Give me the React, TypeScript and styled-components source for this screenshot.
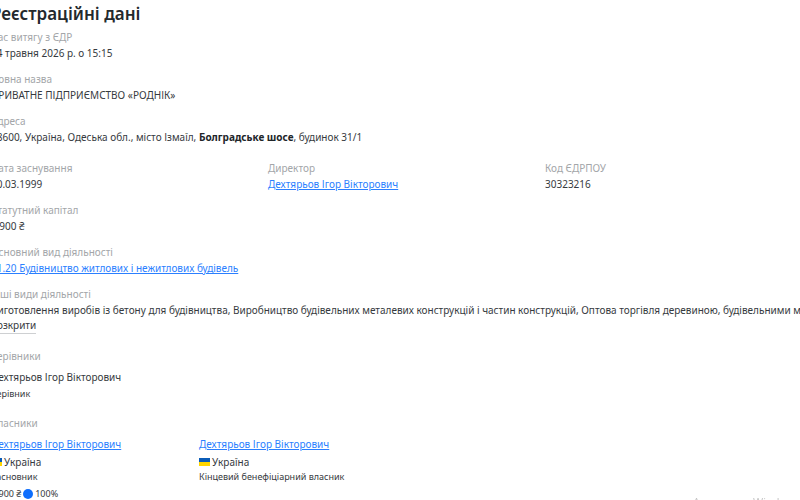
import React from 'react';
import styled, { createGlobalStyle } from 'styled-components';

const GlobalStyle = createGlobalStyle`
  *, *::before, *::after { box-sizing: border-box; }
  body {
    margin: 0;
    background: #fff;
    color: #363a3e;
    font-family: "Noto Sans", "Open Sans", sans-serif;
    font-size: 10px;
    line-height: 16px;
    overflow: hidden;
  }
`;

const Page = styled.main`
  margin-left: -9px;
  padding-top: 2px;
  overflow: hidden;
`;

const Title = styled.h1`
  margin: 0 0 3px;
  color: #24292d;
  font-size: 17px;
  line-height: 24px;
  font-weight: 600;
`;

const Details = styled.dl`
  display: flex;
  flex-direction: column;
  gap: 10px;
  margin: 0;
`;

const FieldRow = styled.div`
  display: grid;
  grid-template-columns: repeat(3, 277px);
  margin-top: 5px;
`;

const Field = styled.div`
  white-space: nowrap;
`;

const Label = styled.dt`
  color: #a3a6a9;
`;

const Value = styled.dd`
  margin: 0;
`;

const Strong = styled.b`
  color: #212529;
`;

const Link = styled.a`
  color: #2b7fff;
  text-decoration: underline;
`;

const Expand = styled.button`
  display: block;
  padding: 0;
  border: 0;
  border-bottom: 1px solid #ced0d2;
  background: none;
  color: inherit;
  font: inherit;
  line-height: 15px;
`;

const Section = styled.section`
  margin-top: 14px;
`;

const SectionTitle = styled.h2`
  margin: 0 0 5px;
  color: #a3a6a9;
  font-size: 10px;
  line-height: 16px;
  font-weight: 400;
`;

const People = styled.div`
  display: grid;
  grid-template-columns: repeat(2, 208px);
`;

const Person = styled.div`
  white-space: nowrap;
`;

const Country = styled.div`
  display: flex;
  align-items: center;
  gap: 2px;
  margin-top: 2px;
`;

const Flag = styled.span`
  width: 11px;
  height: 8px;
  background: linear-gradient(#0b5cb8 50%, #ffd600 50%);
`;

const Role = styled.div<{ $spaced?: boolean }>`
  margin-top: ${({ $spaced }) => ($spaced ? 2 : 0)}px;
  font-size: 9px;
  line-height: 14px;
`;

const Share = styled.div`
  display: flex;
  align-items: center;
  gap: 2px;
  margin-top: 3px;
  font-size: 9px;
  line-height: 14px;
`;

const Pie = styled.span`
  width: 10px;
  height: 10px;
  border-radius: 50%;
  background: #0d6efd;
`;

const Watermark = styled.div`
  position: fixed;
  left: 693px;
  bottom: -11px;
  color: #c4c4c4;
  font-family: "Open Sans", sans-serif;
  font-size: 11px;
  line-height: 18px;
  white-space: nowrap;
  pointer-events: none;
`;

const DIRECTOR = 'Дехтярьов Ігор Вікторович';

function Item({ label, children }: { label: string; children: React.ReactNode }) {
  return (
    <Field>
      <Label>{label}</Label>
      <Value>{children}</Value>
    </Field>
  );
}

export default function App() {
  return (
    <>
      <GlobalStyle />
      <Page>
        <Title>Реєстраційні дані</Title>
        <Details>
          <Item label="Час витягу з ЄДР">14 травня 2026 р. о 15:15</Item>
          <Item label="Повна назва">ПРИВАТНЕ ПІДПРИЄМСТВО «РОДНІК»</Item>
          <Item label="Адреса">
            68600, Україна, Одеська обл., місто Ізмаїл, <Strong>Болградське шосе</Strong>, будинок 31/1
          </Item>
          <FieldRow>
            <Item label="Дата заснування">30.03.1999</Item>
            <Item label="Директор"><Link href="#director">{DIRECTOR}</Link></Item>
            <Item label="Код ЄДРПОУ">30323216</Item>
          </FieldRow>
          <Item label="Статутний капітал">1 900 ₴</Item>
          <Item label="Основний вид діяльності">
            <Link href="#activity">41.20 Будівництво житлових і нежитлових будівель</Link>
          </Item>
          <Item label="Інші види діяльності">
            Виготовлення виробів із бетону для будівництва, Виробництво будівельних металевих
            конструкцій і частин конструкцій, Оптова торгівля деревиною, будівельними матеріалами
            <Expand type="button">Розкрити</Expand>
          </Item>
        </Details>

        <Section>
          <SectionTitle>Керівники</SectionTitle>
          <Person>
            <div>{DIRECTOR}</div>
            <Role $spaced>Керівник</Role>
          </Person>
        </Section>

        <Section>
          <SectionTitle>Власники</SectionTitle>
          <People>
            <Person>
              <Link href="#founder">{DIRECTOR}</Link>
              <Country><Flag />Україна</Country>
              <Role>Засновник</Role>
              <Share>1 900 ₴<Pie />100%</Share>
            </Person>
            <Person>
              <Link href="#beneficiary">{DIRECTOR}</Link>
              <Country><Flag />Україна</Country>
              <Role>Кінцевий бенефіціарний власник</Role>
            </Person>
          </People>
        </Section>
      </Page>
      <Watermark>Активация Windows</Watermark>
    </>
  );
}
